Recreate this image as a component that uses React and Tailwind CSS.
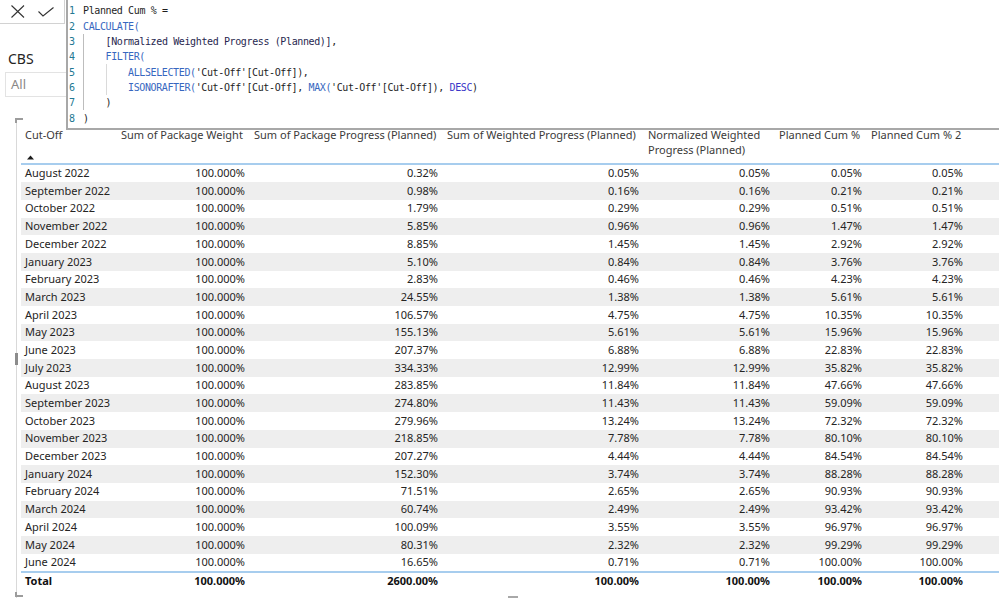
import React from 'react';

const rows = [
  ['August 2022', '100.000%', '0.32%', '0.05%', '0.05%', '0.05%', '0.05%'],
  ['September 2022', '100.000%', '0.98%', '0.16%', '0.16%', '0.21%', '0.21%'],
  ['October 2022', '100.000%', '1.79%', '0.29%', '0.29%', '0.51%', '0.51%'],
  ['November 2022', '100.000%', '5.85%', '0.96%', '0.96%', '1.47%', '1.47%'],
  ['December 2022', '100.000%', '8.85%', '1.45%', '1.45%', '2.92%', '2.92%'],
  ['January 2023', '100.000%', '5.10%', '0.84%', '0.84%', '3.76%', '3.76%'],
  ['February 2023', '100.000%', '2.83%', '0.46%', '0.46%', '4.23%', '4.23%'],
  ['March 2023', '100.000%', '24.55%', '1.38%', '1.38%', '5.61%', '5.61%'],
  ['April 2023', '100.000%', '106.57%', '4.75%', '4.75%', '10.35%', '10.35%'],
  ['May 2023', '100.000%', '155.13%', '5.61%', '5.61%', '15.96%', '15.96%'],
  ['June 2023', '100.000%', '207.37%', '6.88%', '6.88%', '22.83%', '22.83%'],
  ['July 2023', '100.000%', '334.33%', '12.99%', '12.99%', '35.82%', '35.82%'],
  ['August 2023', '100.000%', '283.85%', '11.84%', '11.84%', '47.66%', '47.66%'],
  ['September 2023', '100.000%', '274.80%', '11.43%', '11.43%', '59.09%', '59.09%'],
  ['October 2023', '100.000%', '279.96%', '13.24%', '13.24%', '72.32%', '72.32%'],
  ['November 2023', '100.000%', '218.85%', '7.78%', '7.78%', '80.10%', '80.10%'],
  ['December 2023', '100.000%', '207.27%', '4.44%', '4.44%', '84.54%', '84.54%'],
  ['January 2024', '100.000%', '152.30%', '3.74%', '3.74%', '88.28%', '88.28%'],
  ['February 2024', '100.000%', '71.51%', '2.65%', '2.65%', '90.93%', '90.93%'],
  ['March 2024', '100.000%', '60.74%', '2.49%', '2.49%', '93.42%', '93.42%'],
  ['April 2024', '100.000%', '100.09%', '3.55%', '3.55%', '96.97%', '96.97%'],
  ['May 2024', '100.000%', '80.31%', '2.32%', '2.32%', '99.29%', '99.29%'],
  ['June 2024', '100.000%', '16.65%', '0.71%', '0.71%', '100.00%', '100.00%'],
];

const total = ['Total', '100.000%', '2600.00%', '100.00%', '100.00%', '100.00%', '100.00%'];

const cols = 'grid grid-cols-[96px_133px_193px_201px_131px_92px_101px]';

// DAX code, each token: [text, colour]
const fn = 'text-[#3767c0]';
const tx = 'text-[#1e1e1e]';
const ms = 'text-[#27274f]';
const kw = 'text-[#3a36c8]';

const code = [
  { indent: 0, parts: [['Planned Cum % =', tx]] },
  { indent: 0, parts: [['CALCULATE(', fn]] },
  { indent: 1, parts: [['[Normalized Weighted Progress (Planned)]', ms], [',', tx]] },
  { indent: 1, parts: [['FILTER(', fn]] },
  { indent: 2, parts: [['ALLSELECTED(', fn], ["'Cut-Off'[Cut-Off]", tx], ['),', tx]] },
  {
    indent: 2,
    parts: [
      ['ISONORAFTER(', fn],
      ["'Cut-Off'[Cut-Off], ", tx],
      ['MAX(', fn],
      ["'Cut-Off'[Cut-Off]), ", tx],
      ['DESC', kw],
      [')', tx],
    ],
  },
  { indent: 1, parts: [[')', tx]] },
  { indent: 0, parts: [[')', tx]] },
];

function FormulaEditor() {
  return (
    <div className="absolute left-[66px] top-0 right-0 h-[130px] bg-white border-l-2 border-b-2 border-[#a8a8a8] pt-[3px] font-['DejaVu_Sans_Mono',monospace] text-[10px] tracking-[-0.38px]">
      {code.map((line, i) => (
        <div key={i} className="flex h-[15.35px] items-center whitespace-pre">
          <span className="ml-[1px] w-[14px] text-[#237893]">{i + 1}</span>
          {line.indent >= 1 && (
            <span className="self-stretch w-[22.5px] border-l border-[#bdbdbd]" />
          )}
          {line.indent >= 2 && (
            <span className="self-stretch w-[22.5px] border-l border-[#dadada]" />
          )}
          {line.parts.map(([t, c], j) => (
            <span key={j} className={c}>
              {t}
            </span>
          ))}
        </div>
      ))}
    </div>
  );
}

function Header() {
  const h = [
    'Sum of Package Weight',
    'Sum of Package Progress (Planned)',
    'Sum of Weighted Progress (Planned)',
    'Normalized Weighted Progress (Planned)',
    'Planned Cum %',
    'Planned Cum % 2',
  ];
  return (
    <div className={`${cols} h-[38px] border-b-2 border-[#a7cdee] text-[#3b3a39] leading-[15px]`}>
      <div className="pl-1 flex flex-col justify-between">
        <span>Cut-Off</span>
        <svg width="7" height="5" viewBox="0 0 7 5" className="ml-[2px] mb-[3px]">
          <path d="M0 4.5 L3.5 0.5 L7 4.5 Z" fill="#1b1b1b" />
        </svg>
      </div>
      {h.map((t, i) => (
        <div key={i} className={`pl-1 pr-[5px] ${i === 3 ? '' : 'whitespace-nowrap'}`}>
          {t}
        </div>
      ))}
    </div>
  );
}

export default function App() {
  return (
    <div className="relative w-[999px] h-[598px] bg-white overflow-hidden font-['Noto_Sans',sans-serif]">
      {/* formula bar buttons */}
      <div className="w-[65px] h-[24px] border-r border-b border-[#d2d2d2] flex items-center">
        <svg width="14" height="13" viewBox="0 0 14 13" className="ml-[11px]">
          <path d="M0.5 0.5 L13 12.5 M13 0.5 L0.5 12.5" stroke="#333" strokeWidth="1.1" fill="none" />
        </svg>
        <svg width="16" height="10" viewBox="0 0 16 10" className="ml-[13px] mt-[1px]">
          <path d="M0.5 4.5 L5 9 L15.5 0.5" stroke="#333" strokeWidth="1.1" fill="none" />
        </svg>
      </div>

      {/* slicer */}
      <div className="mt-[26px] h-[18px] pl-[8px] text-[14px] leading-[18px] text-[#252423]">CBS</div>
      <div className="mt-[4px] ml-[5px] w-[80px] h-[25px] border border-[#e3e3e3] pl-[5px] flex items-center text-[13px] text-[#8a8886]">
        All
      </div>

      {/* table visual */}
      <div className="relative mt-[21px] ml-[16px] h-[480px] border-l border-[#d9d9d9] text-[11px] text-[#252423]">
        <div className="absolute left-[-2px] top-0 w-[8px] h-[5px] border-l-2 border-t-2 border-[#9c9c9c]" />
        <div className="absolute left-[-2px] bottom-[1px] w-[8px] h-[5px] border-l-2 border-b-2 border-[#9c9c9c]" />
        <div className="absolute left-[-2px] top-[235px] w-[3px] h-[12px] bg-[#8c8c8c]" />
        <div className="absolute left-[491px] bottom-0 w-[10px] h-[2px] bg-[#a8a8a8]" />

        <div className="ml-[4px] pt-[8.5px]">
          <Header />
          {rows.map((r, i) => (
            <div key={i} className={`${cols} h-[17.7px] items-center ${i % 2 === 1 ? 'bg-[#eeeeee]' : ''}`}>
              {r.map((v, j) => (
                <div key={j} className={j === 0 ? 'pl-1 whitespace-nowrap' : 'pr-[5px] text-right'}>
                  {v}
                </div>
              ))}
            </div>
          ))}
          <div className={`${cols} h-[18px] items-center border-t-2 border-[#a7cdee] font-bold text-[#111]`}>
            {total.map((v, j) => (
              <div key={j} className={j === 0 ? 'pl-1' : 'pr-[5px] text-right'}>
                {v}
              </div>
            ))}
          </div>
        </div>
      </div>

      <FormulaEditor />
    </div>
  );
}
